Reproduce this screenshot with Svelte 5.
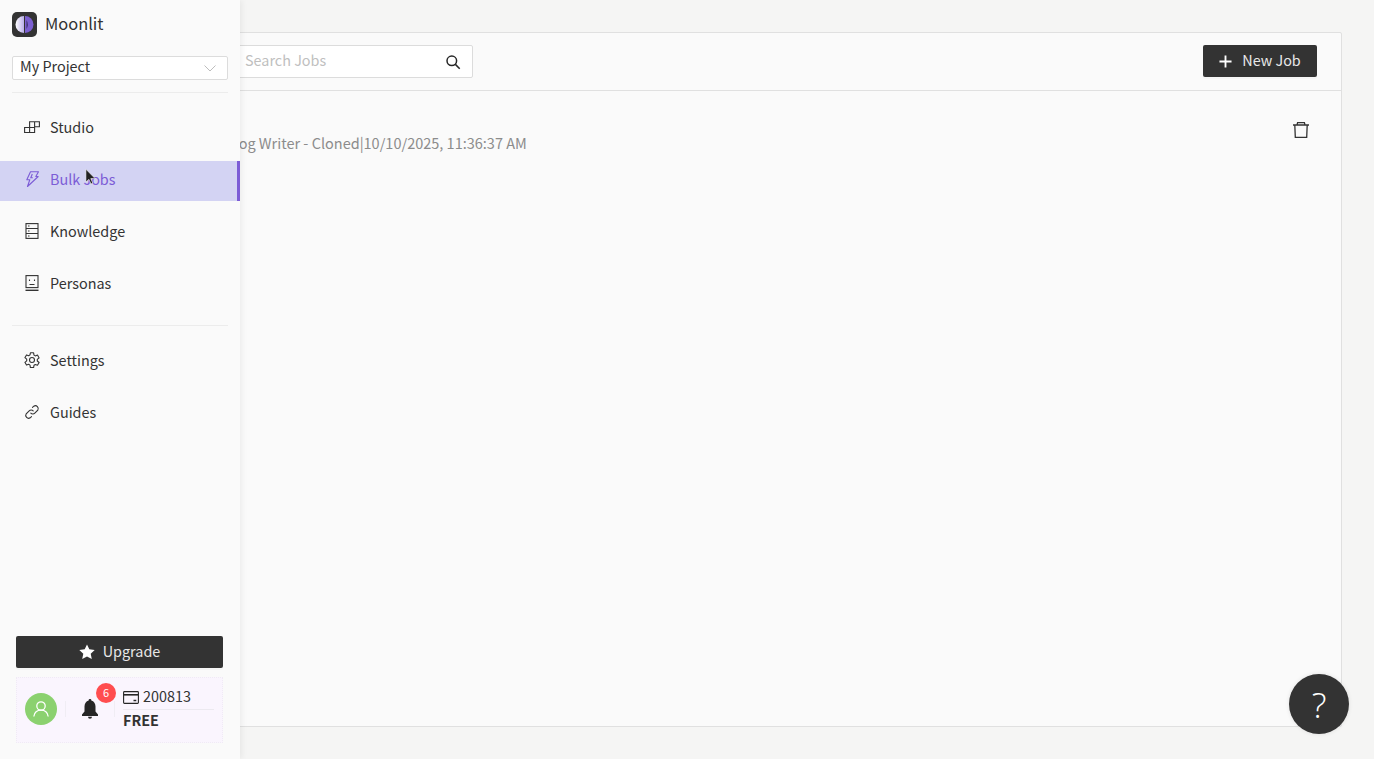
<script lang="ts">
  const topNav = [
    { id: 'studio', label: 'Studio' },
    { id: 'bulk', label: 'Bulk Jobs' },
    { id: 'knowledge', label: 'Knowledge' },
    { id: 'personas', label: 'Personas' },
  ];
  const bottomNav = [
    { id: 'settings', label: 'Settings' },
    { id: 'guides', label: 'Guides' },
  ];
  let activeId = $state('bulk');
</script>

{#snippet navIcon(id: string)}
  <svg class="nav-icon" viewBox="0 0 16 16" fill="none" stroke="currentColor" stroke-width="1.100">
    {#if id === 'studio'}
      <path d="M.6 8.500h5v5h-5zM5.600 8.500h5v5h-5zM5.600 8.500V2.800h5v5.700M10.600 2.800h4.800v5h-4.800" />
    {:else if id === 'bulk'}
      <path d="M6.500.8h8l-2.700 4.700h2.400L3.500 15.500 5.800 8.800H2.800z" stroke-linejoin="round" />
      <path d="M8.300 3 6.800 6.800h2" />
    {:else if id === 'knowledge'}
      <rect x="2" y=".6" width="12" height="14.800" />
      <path d="M2 5.500h12M2 10.500h12M4 3h1.500M4 8h1.500M4 13h1.500" />
    {:else if id === 'personas'}
      <rect x="2" y=".6" width="12" height="12" />
      <path d="M1.500 15.300h13" stroke-width="1.400" />
      <path d="M5.500 4.500v1.500M10.500 4.500v1.500M5.500 9.500h5" />
    {:else if id === 'settings'}
      <path d="M6.400.8h3.200l.4 2.300 1.300.8 2.200-.8 1.600 2.800-1.800 1.500v1.600l1.800 1.500-1.600 2.800-2.200-.8-1.300.8-.4 2.300H6.400L6 13.100l-1.300-.8-2.200.8L.9 10.300l1.800-1.500V7.200L.9 5.700l1.600-2.800 2.200.8L6 2.900z" stroke-linejoin="round" />
      <circle cx="8" cy="8" r="2.500" />
    {:else}
      <path d="M6.800 9.200a2.800 2.800 0 0 0 4 0l3-3a2.900 2.900 0 0 0-4-4L8.500 3.400" stroke-linecap="round" />
      <path d="M9.200 6.800a2.800 2.800 0 0 0-4 0l-3 3a2.900 2.900 0 0 0 4 4l1.300-1.200" stroke-linecap="round" />
    {/if}
  </svg>
{/snippet}

<div class="page">
  <main class="card">
    <header class="toolbar">
      <div class="search">
        <span class="placeholder">Search Jobs</span>
        <svg class="search-icon" viewBox="0 0 16 16" fill="none" stroke="#262626" stroke-width="1.500">
          <circle cx="6.800" cy="6.800" r="4.800" />
          <path d="m10.400 10.400 4.300 4.300" />
        </svg>
      </div>
      <button type="button" class="dark-btn new-job">
        <svg class="plus" viewBox="0 0 14 14" fill="none" stroke="#fff" stroke-width="2"><path d="M7 .5v13M.5 7h13" /></svg>
        <span>New Job</span>
      </button>
    </header>
    <div class="job-row">
      <span class="job-text">Blog Writer - Cloned|10/10/2025, 11:36:37 AM</span>
      <svg class="trash" viewBox="0 0 16 16" fill="none" stroke="#333" stroke-width="1.300">
        <path d="M0 3h16M1.800 3l.5 12.300h11.400L14.200 3M4 3l.6-2.300h6.800L12 3" />
      </svg>
    </div>
  </main>

  <aside class="sidebar">
    <div class="brand">
      <svg class="logo" viewBox="0 0 25 25">
        <defs>
          <linearGradient id="moon" x1="0" x2="1" y1="0" y2="0">
            <stop offset="0" stop-color="#fff" />
            <stop offset="1" stop-color="#b9aee8" />
          </linearGradient>
        </defs>
        <rect width="25" height="25" rx="5" fill="#333" />
        <path d="M12 4a8.500 8.500 0 0 0 0 17z" fill="url(#moon)" />
        <path d="M13 4a8.500 8.500 0 0 1 0 17z" fill="#7b5fd0" />
        <path d="M14.500 8a9 9 0 0 1 0 9z" fill="#3a2f66" />
      </svg>
      <span class="brand-name">Moonlit</span>
    </div>

    <div class="select">
      <span>My Project</span>
      <svg class="chevron" viewBox="0 0 12 7" fill="none" stroke="#bdbdbd" stroke-width="1"><path d="m.5.5 5.500 5.500L11.500.5" /></svg>
    </div>

    <nav class="nav top">
      {#each topNav as item}
        <button type="button" class="nav-item" class:active={activeId === item.id} onclick={() => (activeId = item.id)}>
          {@render navIcon(item.id)}
          <span>{item.label}</span>
        </button>
      {/each}
    </nav>

    <nav class="nav bottom">
      {#each bottomNav as item}
        <button type="button" class="nav-item" class:active={activeId === item.id} onclick={() => (activeId = item.id)}>
          {@render navIcon(item.id)}
          <span>{item.label}</span>
        </button>
      {/each}
    </nav>

    <div class="footer">
      <button type="button" class="dark-btn upgrade">
        <svg class="star" viewBox="0 0 16 16" fill="#fff"><path d="m8 .4 2.300 4.900 5.400.7-4 3.700 1.100 5.300L8 12.400l-4.800 2.600 1.100-5.300-4-3.700 5.400-.7z" /></svg>
        <span>Upgrade</span>
      </button>
      <div class="account">
        <div class="avatar">
          <svg viewBox="0 0 18 18" fill="none" stroke="#fff" stroke-width="1.300">
            <circle cx="9" cy="6" r="4.200" />
            <path d="M1.800 16.500c.6-3.800 3.400-6.300 7.200-6.300s6.600 2.500 7.200 6.300" />
          </svg>
        </div>
        <div class="bell-cell">
          <svg class="bell" viewBox="0 0 16 20" fill="#262626">
            <path d="M8 0a1.300 1.300 0 0 1 1.300 1.500C12 2.200 13.500 4.500 13.500 7.500v5l2.500 3v1.500H0v-1.500l2.500-3v-5c0-3 1.500-5.300 4.200-6A1.300 1.300 0 0 1 8 0zM6 17.800h4a2 2 0 0 1-4 0z" />
          </svg>
          <span class="badge">6</span>
        </div>
        <div class="credits">
          <div class="balance">
            <svg class="wallet" viewBox="0 0 16 13" fill="none" stroke="#262626" stroke-width="1.100">
              <rect x=".6" y=".6" width="14.800" height="11.800" rx=".8" />
              <path d="M.6 3.800h14.800" stroke-width="1.600" />
              <path d="M10.500 9.500h2.800" stroke-width="1.500" />
            </svg>
            <span>200813</span>
          </div>
          <div class="plan">FREE</div>
        </div>
      </div>
    </div>
  </aside>

  <svg class="cursor" viewBox="0 0 12 18">
    <path d="M1 0v14l3.300-3 2.200 5 2-.9-2.200-4.900H11z" fill="#222" stroke="#fff" stroke-width=".6" />
  </svg>

  <button type="button" class="help">?</button>
</div>

<style>
  :global(body) {
    margin: 0;
    background: #f5f5f4;
    overflow: hidden;
  }

  .page {
    position: relative;
    box-sizing: border-box;
    height: 759px;
    padding: 32px 32px 32px 72px;
    font-family: 'Noto Sans CJK SC', 'Noto Sans', sans-serif;
    font-size: 14.400px;
    color: #333;
  }

  button {
    font-family: inherit;
    font-size: inherit;
    cursor: pointer;
  }

  .card {
    height: 100%;
    box-sizing: border-box;
    background: #fafafa;
    border: 1px solid #e0e0e0;
    border-radius: 2px;
  }

  .toolbar {
    display: flex;
    align-items: flex-start;
    justify-content: space-between;
    height: 58px;
    box-sizing: border-box;
    padding: 12px 24px 0 120px;
    border-bottom: 1px solid #e0e0e0;
  }

  .search {
    display: flex;
    align-items: center;
    justify-content: space-between;
    box-sizing: border-box;
    width: 280px;
    height: 33px;
    padding: 0 11px 0 51px;
    background: #fff;
    border: 1px solid #dcdcdc;
    border-radius: 2px;
  }

  .placeholder {
    padding-bottom: 5px;
    color: #bfbfbf;
  }

  .search-icon {
    width: 16px;
    height: 16px;
  }

  .dark-btn {
    display: flex;
    align-items: center;
    justify-content: center;
    background: #333;
    color: #e8e8e8;
    border: none;
    border-radius: 2px;
    box-shadow: 0 2px 0 rgba(0, 0, 0, 0.02);
  }

  .dark-btn span {
    padding-bottom: 4px;
  }

  .new-job {
    width: 114px;
    height: 32px;
    gap: 10px;
  }

  .plus {
    width: 13px;
    height: 13px;
  }

  .job-row {
    display: flex;
    justify-content: space-between;
    align-items: flex-start;
    padding: 31px 32px 0 152px;
  }

  .job-text {
    margin-top: 10px;
    font-size: 14.500px;
    line-height: 22px;
    color: #8c8c8c;
  }

  .trash {
    width: 16px;
    height: 16px;
  }

  .sidebar {
    position: absolute;
    top: 0;
    left: 0;
    bottom: 0;
    width: 240px;
    box-sizing: border-box;
    display: flex;
    flex-direction: column;
    background: #fafafa;
    box-shadow: 2px 0 6px rgba(0, 0, 0, 0.06);
  }

  .brand {
    display: flex;
    align-items: center;
    gap: 8px;
    padding: 12px 12px 0;
    height: 25px;
  }

  .logo {
    width: 25px;
    height: 25px;
  }

  .brand-name {
    padding-bottom: 3px;
    font-size: 16.400px;
  }

  .select {
    display: flex;
    align-items: center;
    justify-content: space-between;
    box-sizing: border-box;
    height: 24px;
    margin: 19px 12px 0;
    padding: 0 11px 0 7px;
    background: #fff;
    border: 1px solid #dcdcdc;
    border-radius: 2px;
  }

  .select span {
    padding-bottom: 5px;
  }

  .chevron {
    width: 12px;
    height: 7px;
  }

  .nav {
    display: flex;
    flex-direction: column;
    gap: 12px;
    position: relative;
  }

  .top {
    margin: 12px 12px 0;
    padding-top: 16px;
    padding-bottom: 20px;
    border-top: 1px solid #ececec;
    border-bottom: 1px solid #ececec;
  }

  .top .nav-item {
    margin: 0 -12px;
  }

  .bottom {
    padding-top: 16px;
  }

  .nav-item {
    display: flex;
    align-items: center;
    gap: 10px;
    height: 40px;
    padding: 0 0 4px 24px;
    background: transparent;
    border: none;
    color: #333;
    text-align: left;
  }

  .nav-item span {
    padding-bottom: 2px;
  }

  .nav-item.active {
    background: #d3d3f3;
    color: #7c5cd6;
    box-shadow: inset -3px 0 0 #7c5cd6;
  }

  .nav-icon {
    width: 16px;
    height: 16px;
    flex: none;
  }

  .footer {
    margin-top: auto;
    padding: 0 17px 16px 16px;
  }

  .upgrade {
    width: 100%;
    height: 32px;
    gap: 8px;
  }

  .star {
    width: 16px;
    height: 16px;
  }

  .account {
    display: flex;
    align-items: center;
    box-sizing: border-box;
    height: 66px;
    margin-top: 9px;
    padding: 0 8px 2px 8px;
    background: #faf5fe;
    border: 1px dotted #f0ebf5;
  }

  .avatar {
    display: flex;
    align-items: center;
    justify-content: center;
    width: 32px;
    height: 32px;
    flex: none;
    border-radius: 50%;
    background: #8bd16f;
  }

  .avatar svg {
    width: 18px;
    height: 18px;
  }

  .bell-cell {
    position: relative;
    display: flex;
    justify-content: center;
    align-items: center;
    flex: none;
    width: 48px;
    height: 16px;
    margin: 0 8px;
    border-left: 1px solid #f0edf4;
    border-right: 1px solid #f0edf4;
  }

  .bell {
    width: 16px;
    height: 20px;
    flex: none;
  }

  .badge {
    position: absolute;
    top: -18px;
    left: 30px;
    width: 20px;
    height: 20px;
    border-radius: 50%;
    background: #ff4d4f;
    color: #fff;
    font-size: 11px;
    line-height: 19px;
    text-align: center;
  }

  .credits {
    flex: 1;
    min-width: 0;
  }

  .balance {
    display: flex;
    align-items: center;
    gap: 4px;
    height: 23px;
    border-bottom: 1px solid #ece9f0;
  }

  .balance span {
    padding-bottom: 5px;
  }

  .wallet {
    width: 16px;
    height: 13px;
    flex: none;
  }

  .plan {
    padding-bottom: 2px;
    line-height: 20px;
    font-weight: 700;
  }

  .cursor {
    position: absolute;
    left: 85px;
    top: 169px;
    width: 11px;
    height: 17px;
  }

  .help {
    position: absolute;
    right: 25px;
    bottom: 25px;
    width: 60px;
    height: 60px;
    padding: 0;
    border: none;
    border-radius: 50%;
    background: #333;
    color: #fff;
    font-family: 'Open Sans', sans-serif;
    font-weight: 300;
    font-size: 35px;
    box-shadow: 0 0 4px rgba(0, 0, 0, 0.1);
  }
</style>
